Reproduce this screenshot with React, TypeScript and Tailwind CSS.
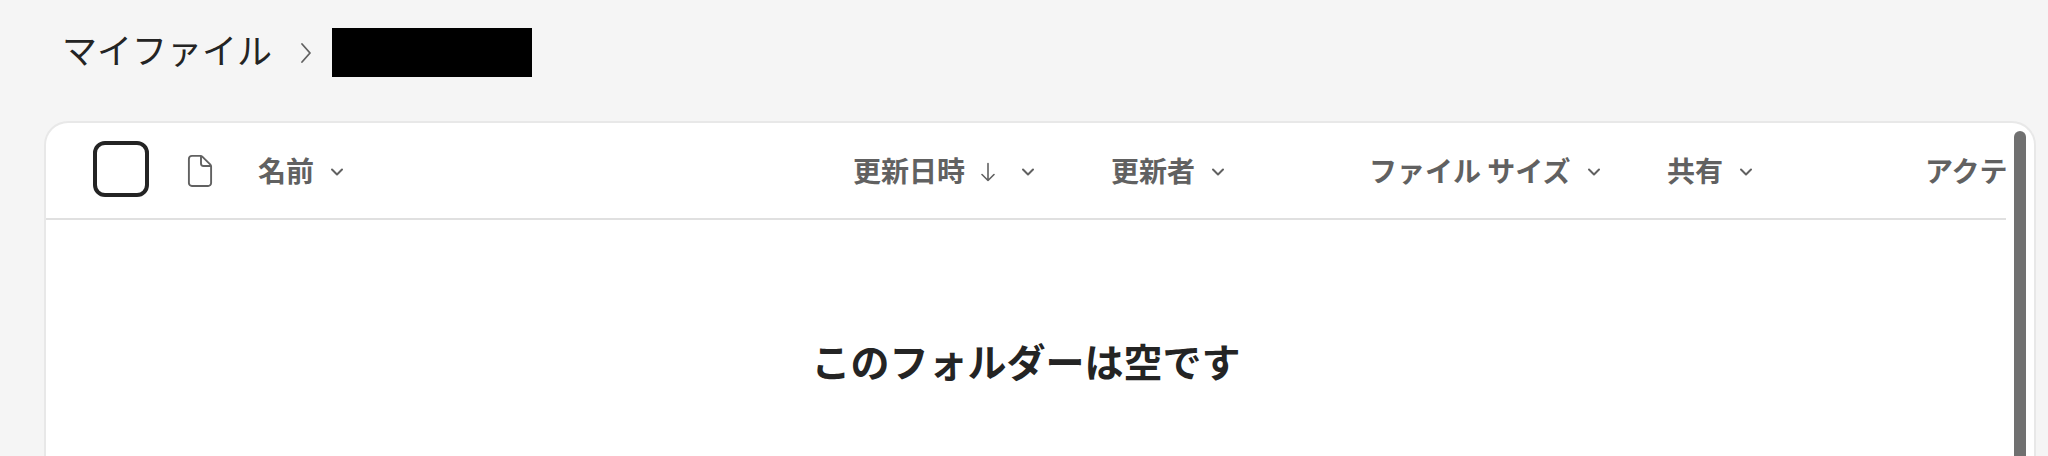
import { useState } from "react";
import { clsx } from "clsx";

type Column = {
    key: string;
    label: string;
    width: string;
    menu: boolean;
};

const columns: Column[] = [
    { key: "name", label: "名前", width: "w-[595px]", menu: true },
    { key: "modified", label: "更新日時", width: "w-[258px]", menu: true },
    { key: "modifiedBy", label: "更新者", width: "w-[258px]", menu: true },
    { key: "size", label: "ファイル サイズ", width: "w-[298px]", menu: true },
    { key: "sharing", label: "共有", width: "w-[258px]", menu: true },
    { key: "activity", label: "アクテ", width: "w-[258px]", menu: false },
];

function ChevronDown() {
    return (
        <svg width="14" height="10" viewBox="0 0 14 10" fill="none" stroke="currentColor" strokeWidth="2" strokeLinecap="round" strokeLinejoin="round" aria-hidden="true">
            <path d="M2 2.5l5 5 5-5" />
        </svg>
    );
}

function ArrowDown() {
    return (
        <svg width="14" height="20" viewBox="0 0 14 20" fill="none" stroke="currentColor" strokeWidth="1.6" strokeLinecap="round" strokeLinejoin="round" aria-hidden="true">
            <path d="M7 1.5v17M1 12.5l6 6 6-6" />
        </svg>
    );
}

function FileIcon() {
    return (
        <svg width="26" height="34" viewBox="0 0 26 34" fill="none" stroke="currentColor" strokeWidth="1.9" strokeLinejoin="round" aria-hidden="true">
            <path d="M4.9 1.9H13.5a2.5 2.5 0 0 1 1.8.7l8.1 8.1a2.5 2.5 0 0 1 .7 1.8V29a3 3 0 0 1-3 3H4.9a3 3 0 0 1-3-3V4.9a3 3 0 0 1 3-3z" />
            <path d="M14 2v7.5a2.5 2.5 0 0 0 2.5 2.5H24" />
        </svg>
    );
}

export default function App() {
    const [allSelected, setAllSelected] = useState(false);
    const [sortKey, setSortKey] = useState("modified");

    return (
        <div className="flex flex-col min-h-screen overflow-hidden bg-[#f5f5f5] text-[#242424] font-['Noto_Sans_CJK_JP',sans-serif]">
            <nav className="flex items-center pl-[62px] pt-7 pb-11">
                <a href="#" className="self-start text-[35px] leading-[42px] text-[#242424]">マイファイル</a>
                <svg className="ml-7 mr-5" width="12" height="22" viewBox="0 0 12 22" fill="none" stroke="#616161" strokeWidth="1.8" strokeLinecap="round" strokeLinejoin="round" aria-hidden="true">
                    <path d="M2 2l8 9-8 9" />
                </svg>
                <div className="w-[200px] h-[49px] bg-black" />
            </nav>

            <main className="flex flex-1 gap-2 ml-11 mr-3 pr-2 border-2 border-b-0 border-[#e8e8e8] rounded-t-3xl bg-white">
                <div className="flex-1 min-w-0 overflow-hidden">
                    <table className="table-fixed w-[2137px] text-[28px] leading-10 text-[#616161]">
                        <thead>
                            <tr className="h-24 border-b-2 border-[#e0e0e0]">
                                <th className="w-[126px] p-0 pl-[47px] pb-1 text-left">
                                    <input
                                        type="checkbox"
                                        aria-label="すべて選択"
                                        checked={allSelected}
                                        onChange={(e) => setAllSelected(e.target.checked)}
                                        className="block appearance-none size-14 border-4 border-[#242424] rounded-xl bg-white checked:bg-[#242424]"
                                    />
                                </th>
                                <th className="w-[86px] p-0 pl-[15px]">
                                    <FileIcon />
                                </th>
                                {columns.map((col) => (
                                    <th key={col.key} className={clsx("p-0 pb-0.5 text-left font-bold", col.width)}>
                                        <button onClick={() => setSortKey(col.key)} className="flex items-center whitespace-nowrap cursor-pointer">
                                            {col.label}
                                            {sortKey === col.key && (
                                                <span className="ml-4 mt-1 mr-2.5">
                                                    <ArrowDown />
                                                </span>
                                            )}
                                            {col.menu && (
                                                <span className="ml-4 mt-1">
                                                    <ChevronDown />
                                                </span>
                                            )}
                                        </button>
                                    </th>
                                ))}
                            </tr>
                        </thead>
                    </table>

                    <h2 className="pt-28 text-center text-[39px] leading-14 font-bold">このフォルダーは空です</h2>
                </div>
                <div className="w-3 mt-2 shrink-0 rounded-t-full bg-[#707070]" />
            </main>
        </div>
    );
}
